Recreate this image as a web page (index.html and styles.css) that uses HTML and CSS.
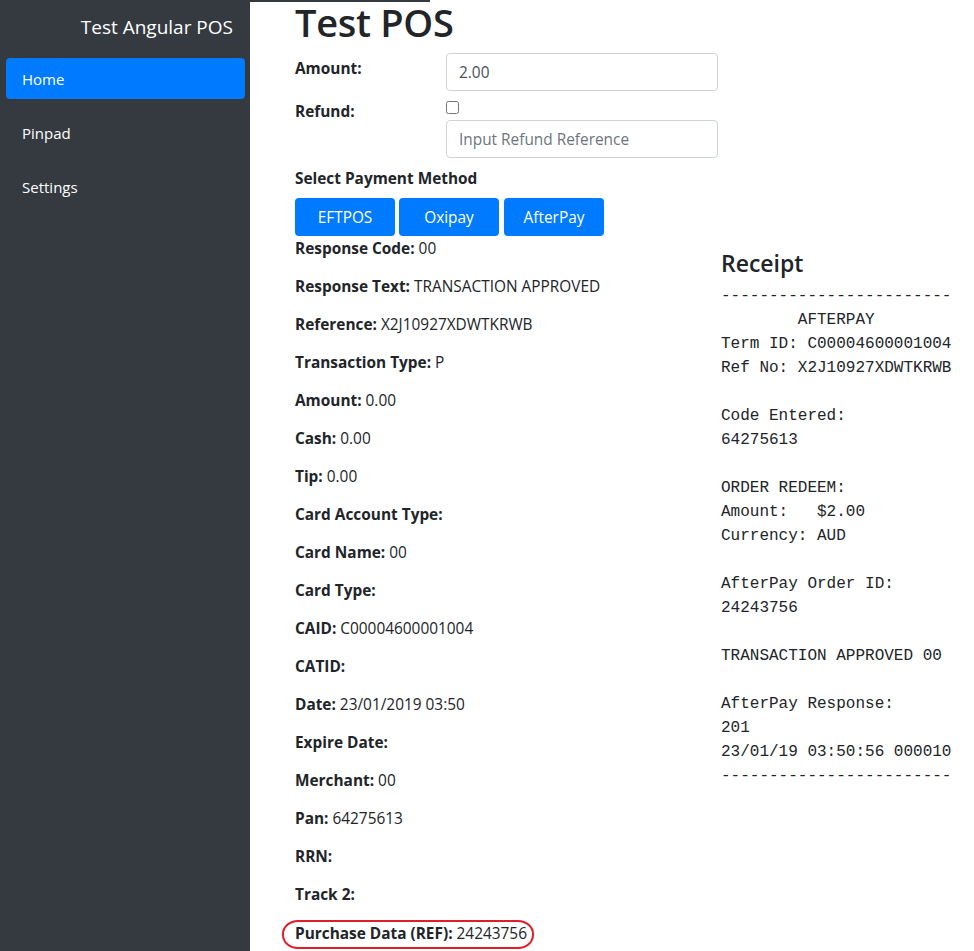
FILE: index.html
```html
<!DOCTYPE html>
<html lang="en">
<head>
<meta charset="utf-8">
<title>Test Angular POS</title>
<link rel="stylesheet" href="styles.css">
</head>
<body>
<div class="app">
  <aside class="sidebar">
    <div class="brand">Test Angular POS</div>
    <nav class="nav">
      <a class="nav-item active" href="#">Home</a>
      <a class="nav-item" href="#">Pinpad</a>
      <a class="nav-item" href="#">Settings</a>
    </nav>
  </aside>
  <main class="main">
    <div class="topbar"></div>
    <div class="content">
      <h1 class="title">Test POS</h1>
      <div class="form-row">
        <label class="form-label">Amount:</label>
        <input class="form-input" type="text" value="2.00">
      </div>
      <div class="form-row refund-row">
        <label class="form-label">Refund:</label>
        <div class="refund-fields">
          <div class="check-line"><input class="check" type="checkbox"></div>
          <input class="form-input" type="text" placeholder="Input Refund Reference">
        </div>
      </div>
      <div class="section-label">Select Payment Method</div>
      <div class="buttons">
        <button class="btn">EFTPOS</button>
        <button class="btn">Oxipay</button>
        <button class="btn">AfterPay</button>
      </div>
      <div class="results">
        <div class="fields">
          <p class="field"><b>Response Code:</b> 00</p>
          <p class="field"><b>Response Text:</b> TRANSACTION APPROVED</p>
          <p class="field"><b>Reference:</b> X2J10927XDWTKRWB</p>
          <p class="field"><b>Transaction Type:</b> P</p>
          <p class="field"><b>Amount:</b> 0.00</p>
          <p class="field"><b>Cash:</b> 0.00</p>
          <p class="field"><b>Tip:</b> 0.00</p>
          <p class="field"><b>Card Account Type:</b></p>
          <p class="field"><b>Card Name:</b> 00</p>
          <p class="field"><b>Card Type:</b></p>
          <p class="field"><b>CAID:</b> C00004600001004</p>
          <p class="field"><b>CATID:</b></p>
          <p class="field"><b>Date:</b> 23/01/2019 03:50</p>
          <p class="field"><b>Expire Date:</b></p>
          <p class="field"><b>Merchant:</b> 00</p>
          <p class="field"><b>Pan:</b> 64275613</p>
          <p class="field"><b>RRN:</b></p>
          <p class="field"><b>Track 2:</b></p>
          <p class="field"><span class="highlight"><b>Purchase Data (REF):</b> 24243756</span></p>
        </div>
        <div class="receipt">
          <h4 class="receipt-title">Receipt</h4>
<pre class="receipt-body">------------------------
        AFTERPAY
Term ID: C00004600001004
Ref No: X2J10927XDWTKRWB

Code Entered:
64275613

ORDER REDEEM:
Amount:   $2.00
Currency: AUD

AfterPay Order ID:
24243756

TRANSACTION APPROVED 00

AfterPay Response:
201
23/01/19 03:50:56 000010
------------------------</pre>
        </div>
      </div>
    </div>
  </main>
</div>
</body>
</html>
```
FILE: styles.css
```css
* { box-sizing: border-box; }
html, body { margin: 0; padding: 0; }
body {
  font-family: "Open Sans", "Noto Sans", sans-serif;
  font-size: 15.4px;
  color: #212529;
  background: #fff;
}
.app {
  display: flex;
  min-height: 100vh;
}
.sidebar {
  width: 250px;
  flex: 0 0 250px;
  background: #343a40;
  padding: 0 5px 0 6px;
}
.brand {
  color: #fff;
  font-size: 19px;
  text-align: right;
  padding: 13px 12px 0 0;
  height: 58px;
  line-height: 28px;
}
.nav {
  display: flex;
  flex-direction: column;
  gap: 13px;
}
.nav-item {
  display: block;
  height: 41px;
  line-height: 39px;
  padding: 2px 0 0 16px;
  color: #fff;
  text-decoration: none;
  border-radius: 4px;
  font-size: 15px;
}
.nav-item.active { background: #007bff; }
.main {
  flex: 1;
  min-width: 0;
}
.topbar {
  width: 180px;
  height: 2px;
  background: #343a40;
}
.content {
  padding-left: 45px;
}
.title {
  font-size: 38px;
  font-weight: 600;
  line-height: 40px;
  margin: 0 0 11px 0;
  letter-spacing: -0.3px;
}
.form-row {
  display: flex;
  align-items: flex-start;
}
.form-label {
  width: 151px;
  flex: 0 0 151px;
  font-weight: 700;
  line-height: 24px;
  padding-top: 4px;
}
.form-input {
  width: 272px;
  height: 38px;
  border: 1px solid #ced4da;
  border-radius: 4px;
  padding: 6px 12px;
  font: inherit;
  color: #495057;
}
.form-input::placeholder { color: #6c757d; opacity: 1; }
.refund-row { margin-top: 4px; }
.refund-row .form-label { padding-top: 5px; }
.check-line {
  height: 25px;
  display: flex;
  align-items: center;
}
.check {
  margin: 0;
  width: 13px;
  height: 13px;
}
.section-label {
  font-weight: 700;
  line-height: 24px;
  margin-top: 9px;
}
.buttons {
  display: flex;
  gap: 4px;
  margin-top: 7px;
}
.btn {
  width: 100px;
  height: 38px;
  border: none;
  border-radius: 4px;
  background: #007bff;
  color: #fff;
  font: inherit;
  padding: 0;
}
.btn + .btn + .btn { margin-left: 1px; }
.results {
  display: grid;
  grid-template-columns: 426px 1fr;
  margin-top: 2px;
}
.field {
  margin: 0 0 16px 0;
  line-height: 22px;
  white-space: nowrap;
}
.highlight {
  display: inline-block;
  margin-left: -13px;
  border: 2px solid #e11d2a;
  border-radius: 16px / 14px;
  padding: 1px 5px 2px 11px;
  margin-top: -2px;
}
.receipt {
  padding-top: 11px;
}
.receipt-title {
  font-size: 23px;
  font-weight: 600;
  line-height: 29px;
  margin: 0 0 6px 0;
}
.receipt-body {
  margin: 0;
  font-family: "Liberation Mono", "Courier New", monospace;
  font-size: 16px;
  line-height: 24px;
  color: #212529;
}
```
